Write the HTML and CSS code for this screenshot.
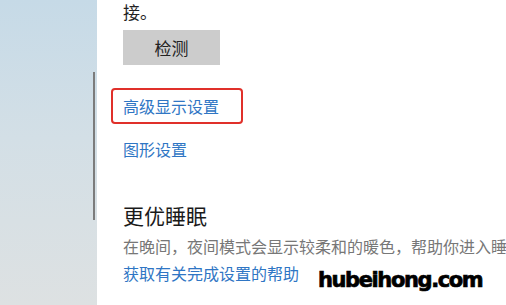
FILE: index.html
```html
<!DOCTYPE html>
<html lang="zh-CN">
<head>
<meta charset="utf-8">
<link rel="stylesheet" href="styles.css">
</head>
<body>
<div class="window">
  <aside class="sidebar"><div class="thumb"></div></aside>
  <main class="content">
    <p class="tail">接。</p>
    <button class="btn">检测</button>
    <div class="highlight"><a class="link">高级显示设置</a></div>
    <a class="link graphics">图形设置</a>
    <h2 class="heading">更优睡眠</h2>
    <p class="desc">在晚间，夜间模式会显示较柔和的暖色，帮助你进入睡</p>
    <a class="link help">获取有关完成设置的帮助</a>
  </main>
  <div class="watermark">hubeihong.com</div>
</div>
</body>
</html>
```
FILE: styles.css
```css
html, body {
  margin: 0;
  padding: 0;
  background: #fff;
}
.window {
  position: relative;
  display: flex;
  width: 506px;
  height: 305px;
  overflow: hidden;
  font-family: "Noto Sans CJK SC", "Noto Sans", sans-serif;
}
.sidebar {
  position: relative;
  flex: 0 0 97px;
  background: linear-gradient(180deg, #c6dae7 0%, #d3dfe6 45%, #dde1e2 100%);
}
.thumb {
  position: absolute;
  left: 93px;
  top: 72px;
  width: 2px;
  height: 148px;
  background: #7c7c7c;
}
.content {
  flex: 1;
  min-width: 0;
  padding-left: 26px;
  white-space: nowrap;
  overflow: hidden;
}
.tail {
  margin: 0;
  font-size: 17px;
  line-height: 24px;
  color: #222;
}
.btn {
  display: block;
  margin-top: 6px;
  width: 97px;
  height: 35px;
  border: 0;
  background: #cccccc;
  font-family: inherit;
  font-size: 17px;
  color: #222;
  padding: 0;
}
.highlight {
  margin: 23px 0 0 -12px;
  width: 118px;
  height: 32px;
  border: 2px solid #e0302a;
  border-radius: 4px;
  padding-left: 10px;
  display: flex;
  align-items: center;
}
.link {
  display: block;
  font-size: 16px;
  line-height: 24px;
  color: #2f76c4;
}
.graphics {
  margin-top: 13px;
}
.heading {
  margin: 40px 0 0;
  font-size: 21px;
  font-weight: 400;
  line-height: 28px;
  color: #1a1a1a;
}
.desc {
  margin: 5px 0 0;
  font-size: 16px;
  line-height: 24px;
  color: #777;
}
.help {
  margin-top: 3px;
}
.watermark {
  position: absolute;
  left: 318px;
  top: 268px;
  font-family: "DejaVu Sans", sans-serif;
  font-weight: 700;
  font-size: 21px;
  letter-spacing: -1.4px;
  -webkit-text-stroke: 0.7px #000;
  color: #000;
}
```
